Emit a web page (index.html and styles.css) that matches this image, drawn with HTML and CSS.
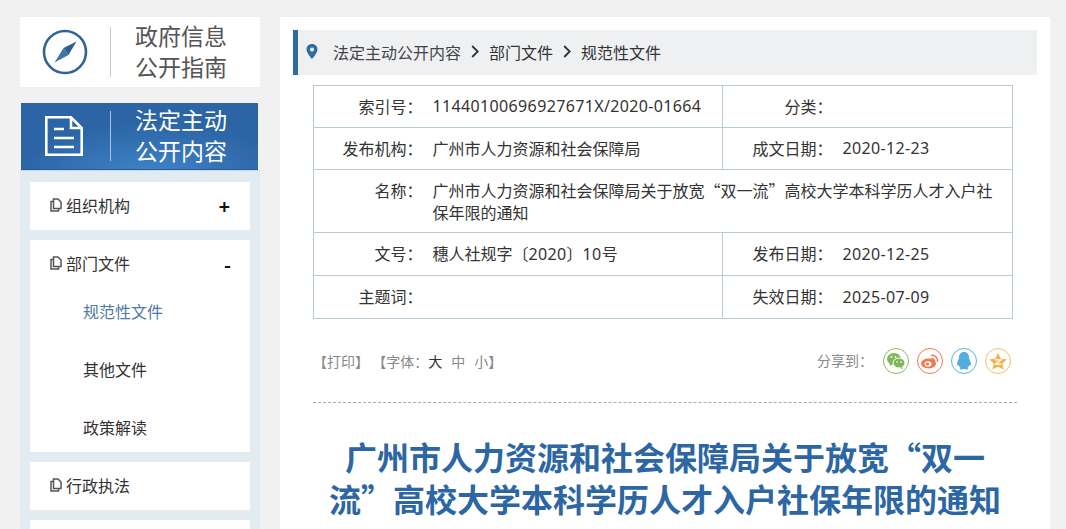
FILE: index.html
```html
<!DOCTYPE html>
<html lang="zh-CN">
<head>
<meta charset="utf-8">
<title>规范性文件</title>
<link rel="stylesheet" href="styles.css">
</head>
<body>
<div class="page">
  <aside class="side">
    <div class="guide">
      <div class="guide-icon">
        <svg width="46" height="46" viewBox="0 0 46 46"><circle cx="23" cy="23" r="21" fill="none" stroke="#2f6496" stroke-width="2.600"/><path d="M34.500 12.500 L26.500 26 L21.500 19 Z" fill="#2a5f94"/><path d="M12.500 33.500 L21.500 19 L26.500 26 Z" fill="#3f74a6"/></svg>
      </div>
      <div class="guide-text">政府信息<br>公开指南</div>
    </div>
    <div class="open">
      <div class="open-icon">
        <svg width="38" height="40" viewBox="0 0 38 40"><path d="M1.300 1.300H26L36.700 12V38.700H1.300Z" fill="none" stroke="#fff" stroke-width="2.600"/><path d="M26 1.300V12H36.700" fill="none" stroke="#fff" stroke-width="2.600"/><path d="M9 13H19M9 22H29M9 31H29" stroke="#fff" stroke-width="2.600"/></svg>
      </div>
      <div class="open-text">法定主动<br>公开内容</div>
    </div>
    <div class="menu">
      <section class="card">
        <div class="head"><svg class="doc" width="12" height="14" viewBox="0 0 12 14"><path d="M3.500 1H8L11 4V10.500H3.500Z M3 3.500H1V13H8.500V11" fill="none" stroke="#555" stroke-width="1.500"/></svg><span>组织机构</span><b class="plus">+</b></div>
      </section>
      <section class="card">
        <div class="head"><svg class="doc" width="12" height="14" viewBox="0 0 12 14"><path d="M3.500 1H8L11 4V10.500H3.500Z M3 3.500H1V13H8.500V11" fill="none" stroke="#555" stroke-width="1.500"/></svg><span>部门文件</span><b class="minus">-</b></div>
        <div class="sub active">规范性文件</div>
        <div class="sub">其他文件</div>
        <div class="sub">政策解读</div>
      </section>
      <section class="card">
        <div class="head"><svg class="doc" width="12" height="14" viewBox="0 0 12 14"><path d="M3.500 1H8L11 4V10.500H3.500Z M3 3.500H1V13H8.500V11" fill="none" stroke="#555" stroke-width="1.500"/></svg><span>行政执法</span></div>
      </section>
      <section class="card"><div class="head"></div></section>
    </div>
  </aside>
  <main class="main">
    <nav class="crumb">
      <svg class="pin" width="12" height="15" viewBox="0 0 12 15"><path fill-rule="evenodd" d="M6 0C2.700 0 .5 2.400.5 5.400.5 9 6 15 6 15s5.500-6 5.500-9.600C11.500 2.400 9.300 0 6 0Zm0 3.600a2 2 0 1 1 0 4 2 2 0 0 1 0-4Z" fill="#2f6f9f"/></svg>
      <span class="c1">法定主动公开内容</span>
      <svg class="chev" width="8" height="13" viewBox="0 0 8 13"><path d="M1.200 1 6.700 6.500 1.200 12" fill="none" stroke="#333" stroke-width="1.800"/></svg>
      <span>部门文件</span>
      <svg class="chev" width="8" height="13" viewBox="0 0 8 13"><path d="M1.200 1 6.700 6.500 1.200 12" fill="none" stroke="#333" stroke-width="1.800"/></svg>
      <span>规范性文件</span>
    </nav>
    <table class="info">
      <colgroup><col class="k1"><col class="v1"><col class="k2"><col class="v2"></colgroup>
      <tr class="r42"><th>索引号<span class="colon">：</span></th><td><span class="num">11440100696927671X/2020-01664</span></td><th class="b">分类<span class="colon">：</span></th><td class="d"></td></tr>
      <tr class="r42"><th>发布机构<span class="colon">：</span></th><td>广州市人力资源和社会保障局</td><th class="b">成文日期<span class="colon">：</span></th><td class="d"><span class="num">2020-12-23</span></td></tr>
      <tr class="r63"><th>名称<span class="colon">：</span></th><td colspan="3">广州市人力资源和社会保障局关于放宽“双一流”高校大学本科学历人才入户社保年限的通知</td></tr>
      <tr class="r43"><th>文号<span class="colon">：</span></th><td>穗人社规字〔<span class="num">2020</span>〕<span class="num">10</span>号</td><th class="b">发布日期<span class="colon">：</span></th><td class="d"><span class="num">2020-12-25</span></td></tr>
      <tr class="r43"><th>主题词<span class="colon">：</span></th><td></td><th class="b">失效日期<span class="colon">：</span></th><td class="d"><span class="num">2025-07-09</span></td></tr>
    </table>
    <div class="tools">
      <div class="print">【打印】 【字体<span class="colon">：</span><span class="big">大</span><span class="mid">中</span><span class="mid">小</span>】</div>
      <div class="share">
        <span class="share-label">分享到<span class="colon">：</span></span>
        <span class="ico wx"><svg width="18" height="16" viewBox="0 0 18 16"><ellipse cx="7" cy="6" rx="7" ry="6" fill="#7fb75a"/><path d="M3 10 2.500 13 6 11Z" fill="#7fb75a"/><ellipse cx="12" cy="10" rx="6" ry="5" fill="#7fb75a" stroke="#fff"/><path d="M15 14l1 2-3-1Z" fill="#7fb75a"/><circle cx="4.500" cy="4" r=".9" fill="#fff"/><circle cx="8.500" cy="4" r=".9" fill="#fff"/><circle cx="10" cy="9" r=".8" fill="#fff"/><circle cx="14" cy="9" r=".8" fill="#fff"/></svg></span>
        <span class="ico wb"><svg width="18" height="16" viewBox="0 0 18 16"><ellipse cx="7.500" cy="10.500" rx="7.500" ry="5" fill="#ee7a4f"/><ellipse cx="7" cy="11" rx="3.500" ry="2.700" fill="#fff"/><circle cx="6.500" cy="11" r="1.600" fill="#ee7a4f"/><path d="M10 2.500a5.500 5.500 0 0 1 6.500 6.500M10.500 5.500a2.700 2.700 0 0 1 3 3" fill="none" stroke="#ee7a4f" stroke-width="1.500"/></svg></span>
        <span class="ico qq"><svg width="16" height="18" viewBox="0 0 16 18"><path d="M8 0c3.500 0 5 2.500 5 5.500 0 1.500 2 4 2 7 0 1.500-1 1.500-2 .5 0 1.500-.5 2-1.500 3 1 .5 1 1.500-.5 1.500-1.500 0-2.500-.5-3-.5s-1.500.5-3 .5-1.500-1-.5-1.500c-1-1-1.500-1.500-1.500-3-1 1-2 1-2-.5 0-3 2-5.500 2-7C3 2.500 4.500 0 8 0Z" fill="#56acdf"/></svg></span>
        <span class="ico st"><svg width="18" height="17" viewBox="0 0 18 17"><path d="M9 0l2.700 5.600 6.100.8-4.500 4.200 1.200 6L9 13.700 3.500 16.600l1.200-6L.2 6.400l6.100-.8Z" fill="#f4b24c"/><path d="M6 6.800h6L6.500 11h5.500" fill="none" stroke="#fff" stroke-width="1.300"/></svg></span>
      </div>
    </div>
    <h1 class="title">广州市人力资源和社会保障局关于放宽“双一流”高校大学本科学历人才入户社保年限的通知</h1>
  </main>
</div>
</body>
</html>
```
FILE: styles.css
```css
* { box-sizing: border-box; }
html, body { margin: 0; height: 529px; overflow: hidden; }
body { background: #f1f1f1; font-family: "Noto Sans CJK SC", "Noto Sans", sans-serif; color: #333; }
.page { display: flex; gap: 20px; padding: 17px 16px 0 20px; height: 529px; overflow: hidden; }

.side { width: 240px; flex: none; }
.guide { height: 70px; background: #fff; display: flex; align-items: center; }
.guide-icon { width: 91px; height: 50px; display: flex; align-items: center; justify-content: center; border-right: 1px solid #ccc; padding-right: 1px; }
.guide-text { margin-left: 24px; padding-bottom: 2px; font-size: 23px; line-height: 31px; color: #555; }
.open { margin-top: 16px; margin-left: 1px; width: 237px; height: 67px; display: flex; align-items: center; background: radial-gradient(ellipse 130px 50px at 130px 70px, #3f84c6, #2c65a6); border-bottom: 1px solid #2a5a9c; }
.open-icon { width: 90px; height: 50px; display: flex; align-items: center; justify-content: center; border-right: 1px solid #a9c3df; padding-right: 3px; }
.open-text { margin-left: 24px; padding-bottom: 2px; font-size: 23px; line-height: 31px; color: #fff; }
.menu { background: #e2ebef; border-top: 1px solid #c4dcf2; padding: 11px 10px 0; }
.card { background: #fff; margin-bottom: 10px; }
.head { height: 48px; padding: 0 20px 2px; display: flex; align-items: center; font-size: 16px; color: #333; }
.doc { margin-right: 4px; flex: none; }
.head span { flex: 1; }
.head b { color: #111; font-size: 19px; line-height: 1; }
.minus { margin-right: -1px; }
.sub { height: 58px; line-height: 46px; padding-left: 53px; font-size: 16px; color: #333; }
.sub:last-child { height: 48px; }
.sub.active { color: #4f7ba6; }

.main { width: 770px; flex: none; height: 520px; background: #fff; padding: 13px 13px 0; overflow: hidden; }
.crumb { height: 45px; background: #eff0f2; border-left: 5px solid #2f6b9e; display: flex; align-items: center; font-size: 16px; color: #333; padding: 0 0 2px 8px; }
.pin { margin-right: 15px; }
.c1 { color: #444; }
.chev { margin: 0 10px; }
.num { font-family: "Noto Sans", sans-serif; letter-spacing: .36px; }
.colon { font-family: "Noto Sans CJK JP", sans-serif; }

.info { border-collapse: collapse; table-layout: fixed; width: 699px; margin: 10px 0 0 20px; font-size: 16px; color: #333; border: 1px solid #b8cbd9; }
.k1 { width: 110px; }
.v1 { width: 299px; }
.k2 { width: 110px; }
.v2 { width: 180px; }
.info th, .info td { border-top: 1px solid #b8cbd9; border-bottom: 1px solid #b8cbd9; font-weight: 400; padding: 0 9px 2px; line-height: 22px; }
.info th { text-align: right; padding-right: 1px; }
.info th.b { padding-left: 0; border-left: 1px solid #b8cbd9; padding-right: 0; }
.info td.d { padding-left: 10px; }
.r42 { height: 42px; }
.r43 { height: 43px; }
.r63 { height: 63px; }
.info tr.r63 th, .info tr.r63 td { vertical-align: top; padding-top: 9px; }

.tools { margin: 0 20px; width: 704px; height: 84px; display: flex; justify-content: space-between; align-items: flex-start; padding-top: 29px; border-bottom: 1px dashed #aaa; }
.print { font-size: 14px; color: #888; line-height: 26px; }
.big { color: #333; }
.mid { margin-left: 9px; }
.share { display: flex; align-items: center; margin-right: 6px; }
.share-label { font-size: 14px; color: #888; margin-right: 2px; padding-bottom: 2px; }
.ico { width: 26px; height: 26px; border-radius: 50%; border: 1px solid; display: flex; align-items: center; justify-content: center; margin-left: 8px; }
.wx { border-color: #86bb62; }
.wb { border-color: #ee7a4f; }
.qq { border-color: #5cb0e2; }
.st { border-color: #f4bf66; }
.title { margin: 32px 0 0 32px; width: 680px; text-align: center; font-size: 32px; line-height: 42px; font-weight: 700; color: #2c66a4; }
```
